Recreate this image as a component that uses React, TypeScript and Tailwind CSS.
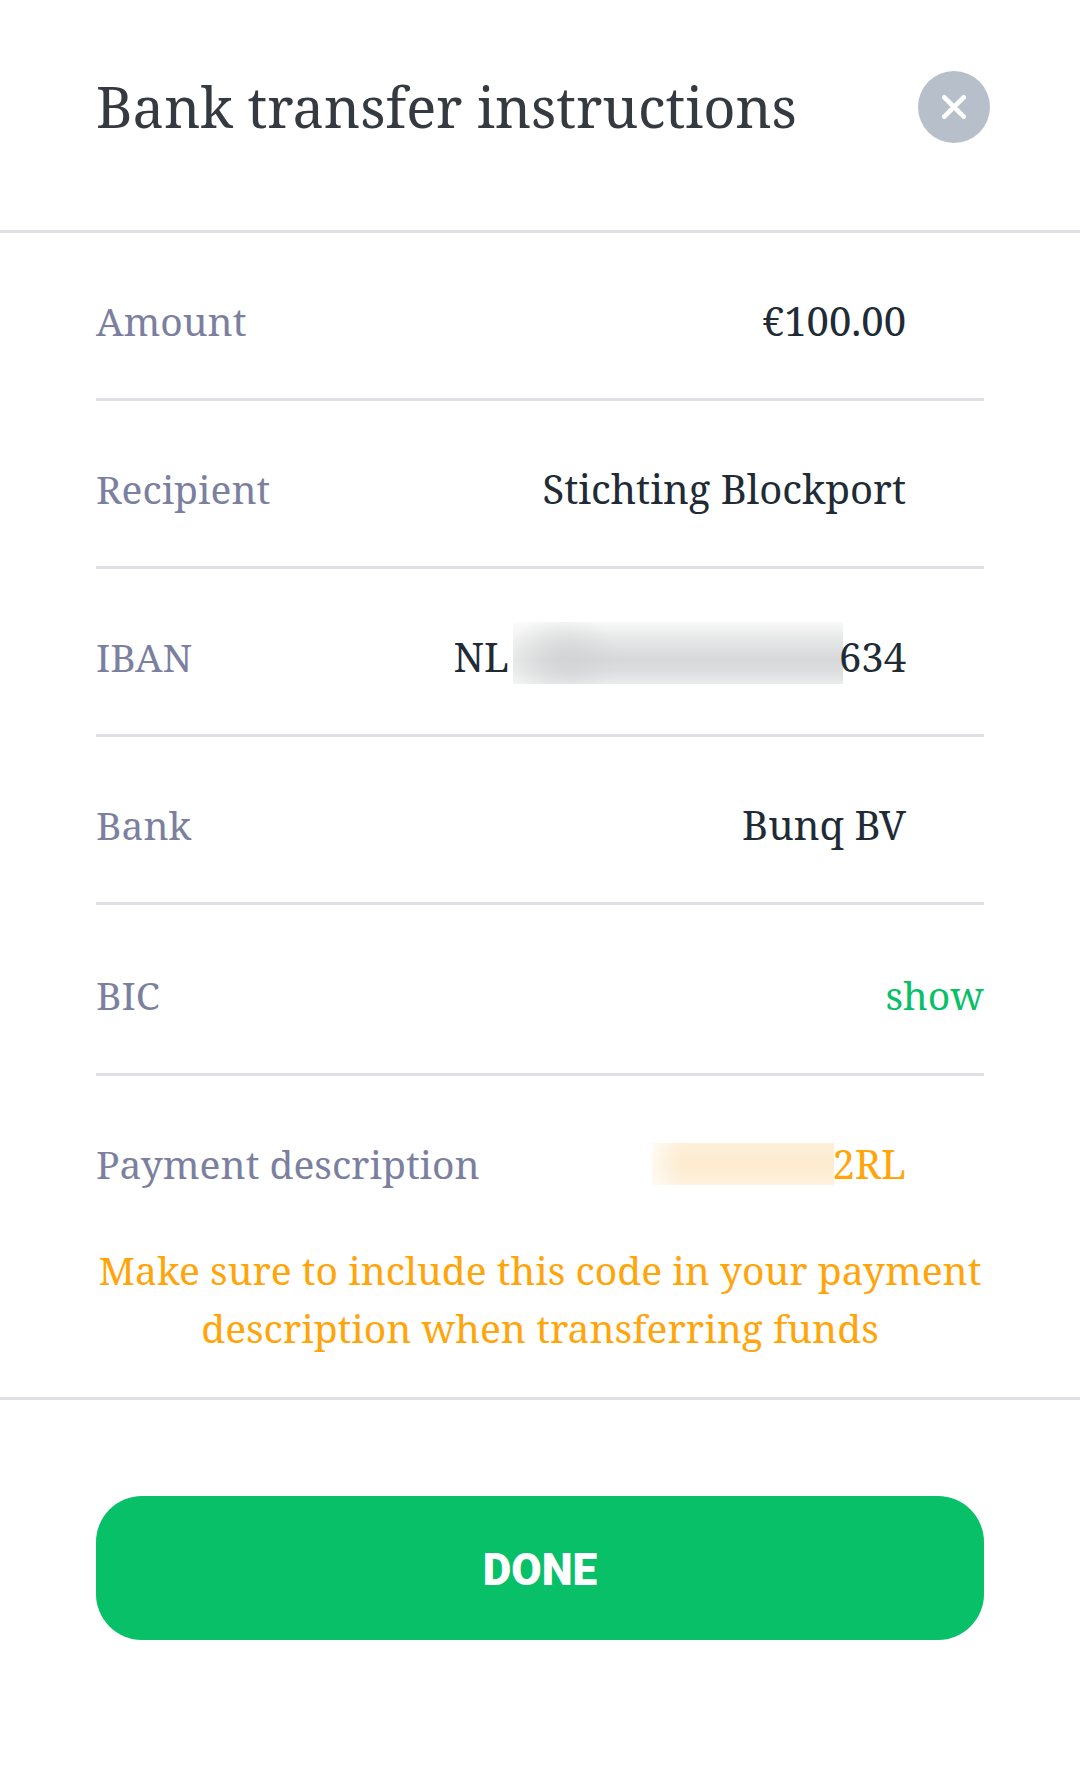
import type { ReactNode } from "react";

type RowProps = { label: string; children: ReactNode; flush?: boolean };

function Row({ label, children, flush = false }: RowProps) {
  return (
    <div
      className={
        flush
          ? "flex min-h-[171px] items-center justify-between border-b-[3px] border-[#dee0e6] pt-3"
          : "flex min-h-[168px] items-center justify-between border-b-[3px] border-[#dee0e6] pt-2.5 last:min-h-[165px] last:border-b-0"
      }
    >
      <dt className="text-[#7b80a0]">{label}</dt>
      <dd className={flush ? "flex items-center" : "flex items-center pr-[78px] text-[40px]"}>{children}</dd>
    </div>
  );
}

export default function App() {
  return (
    <main className="min-h-screen bg-white font-['Noto_Serif','Liberation_Serif',serif] text-[39px] leading-[58px] text-[#212b36]">
      <header className="flex items-start justify-between border-b-[3px] border-[#dee0e6] pt-[71px] pr-[90px] pb-[87px] pl-24">
        <h1 className="text-[56px] leading-[70px] text-[#343a40]">Bank transfer instructions</h1>
        <button
          type="button"
          aria-label="Close"
          className="flex size-[72px] shrink-0 cursor-pointer items-center justify-center rounded-full bg-[#b7c0ca]"
        >
          <svg viewBox="0 0 24 24" className="size-6" fill="none" stroke="white" strokeWidth="4.6" strokeLinecap="round">
            <path d="M2.300 2.300 21.700 21.700M21.700 2.300 2.300 21.700" />
          </svg>
        </button>
      </header>

      <dl className="px-24">
        <Row label="Amount">€100.00</Row>
        <Row label="Recipient">Stichting Blockport</Row>
        <Row label="IBAN">
          NL
          <span className="-mr-1 mb-2 ml-1 h-[62px] w-[330px] bg-[radial-gradient(ellipse_56px_44px_at_15%_58%,#cfd0d1aa,#d7d8d900),linear-gradient(to_right,#ffffff77,#ffffff00_18%),linear-gradient(#f8f9f8,#e6e7e7_28%,#d7d8d9_60%,#dcddde_78%,#eaebeb)]" />
          634
        </Row>
        <Row label="Bank">Bunq BV</Row>
        <Row label="BIC" flush>
          <button type="button" className="cursor-pointer text-[#07c068]">
            show
          </button>
        </Row>
        <Row label="Payment description">
          <span className="-mr-0.5 h-[42px] w-[182px] bg-[linear-gradient(to_right,#ffffffaa,#ffffff00_16%),linear-gradient(#fdf0db,#fdecd0_40%,#fdecd0_60%,#fef2e0)]" />
          <span className="text-[#ffa50a]">2RL</span>
        </Row>
      </dl>

      <p className="px-20 pb-10 text-center text-[#ffa50a]">
        Make sure to include this code in your payment description when transferring funds
      </p>

      <footer className="border-t-[3px] border-[#dee0e6] px-24 pt-24 pb-[136px]">
        <button
          type="button"
          className="h-36 w-full cursor-pointer rounded-[46px] bg-[#07c068] pt-1 font-['Roboto',sans-serif] text-[44px] font-black text-white"
        >
          DONE
        </button>
      </footer>
    </main>
  );
}
